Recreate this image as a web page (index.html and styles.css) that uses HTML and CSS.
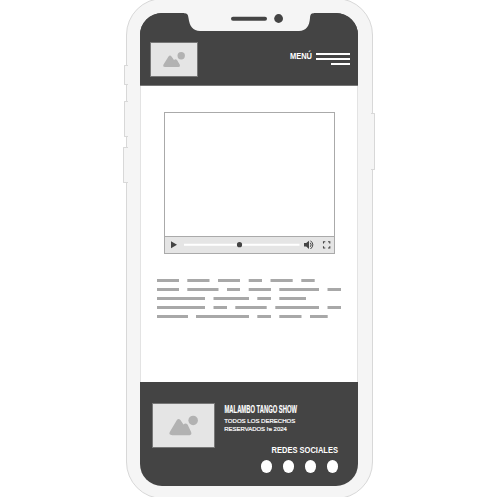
FILE: index.html
```html
<!DOCTYPE html>
<html lang="es">
<head>
<meta charset="utf-8">
<title>Malambo Tango Show</title>
<link rel="stylesheet" href="styles.css">
</head>
<body>
<div class="phone">
  <i class="button silent"></i><i class="button volume-up"></i><i class="button volume-down"></i><i class="button power"></i>
  <main class="screen">
    <svg class="notch" width="130" height="31" viewBox="184 0 130 31"><path d="M184 12v1.2C187 13.2 188 14 188.500 18C189.500 26 193 31 200 31H299C306 31 309.500 26 310 18C310.300 14.500 311 13.200 314 13.200V12Z" fill="#f5f5f5"/><rect x="231" y="16.800" width="36" height="4" rx="2" fill="#444"/><circle cx="278.600" cy="18.500" r="4.400" fill="#444"/></svg>
    <header class="header">
      <svg class="picture logo" viewBox="0 0 48 35"><path d="M13.500 22.500L18.500 14.500Q20 12.700 21.500 14.500L24 18Q25.500 16.500 27 18L29.700 22.500Q30.500 25 28.500 25H15Q12.500 25 13.500 22.500Z"/><circle cx="31.200" cy="13.700" r="3.700"/></svg>
      <nav class="menu">
        <svg class="label" width="24" height="14" viewBox="0 -2 24 14"><text x="1" y="9" textLength="22" lengthAdjust="spacingAndGlyphs" font-size="8.500">MENÚ</text></svg>
        <span class="lines"><i></i><i></i><i></i></span>
      </nav>
    </header>
    <section class="content">
      <div class="video">
        <div class="frame"></div>
        <svg class="controls" width="169" height="16" viewBox="165 237 169 16"><path d="M171 241.300V248.300L177 244.800Z" fill="#444"/><path d="M184 244.800H299.500" stroke="#fff" stroke-width="2"/><circle cx="239.500" cy="244.700" r="2.600" fill="#444"/><path d="M304 243H306.200L309 240.700V248.900L306.200 246.600H304Z" fill="#444"/><path d="M310.300 242.800Q312 244.800 310.300 246.800M310.500 240.700Q315.200 244.800 310.500 249" fill="none" stroke="#444"/><path d="M325.300 241.800H323.500V243.600M328 241.800H329.800V243.600M325.300 248H323.500V246.200M328 248H329.800V246.200" fill="none" stroke="#444" stroke-width="1.100"/></svg>
      </div>
      <svg class="copy" width="184" height="39" viewBox="157 279 184 39"><path d="M157 280.500H179M187.300 280.500H209.500M218 280.500H240M248.700 280.500H262M270.500 280.500H292.700M301.300 280.500H314.700M157 289.500H179M187.300 289.500H218.500M227 289.500H240M248.700 289.500H271M279.300 289.500H319M327.500 289.500H341M157 298.500H205M213.500 298.500H249M257.300 298.500H271M279.300 298.500H306M157 307.500H205M213.500 307.500H227M235.300 307.500H266.700M275.300 307.500H319M327.500 307.500H341M157 316.500H188M196 316.500H249M257.300 316.500H271M279.300 316.500H301.500M310 316.500H327.700"/></svg>
    </section>
    <footer class="footer">
      <div class="brand">
        <svg class="picture poster" viewBox="0 0 62 44"><path d="M17.500 28.500L24.500 16.500Q26 14.500 28 16.500L31 21Q33 19 35 21L38.500 28.500Q39.500 31.500 37 31.500H20Q16 31.500 17.500 28.500Z"/><circle cx="40.500" cy="17" r="4.700"/></svg>
        <svg class="label" width="100" height="36" viewBox="223 401 100 36"><text class="title" x="224.500" y="413" textLength="72.500" lengthAdjust="spacingAndGlyphs" font-size="11">MALAMBO TANGO SHOW</text><text class="legal" x="224.300" y="423" textLength="71" lengthAdjust="spacingAndGlyphs" font-size="6.200">TODOS LOS DERECHOS</text><text class="legal" x="224.300" y="431" textLength="62.500" lengthAdjust="spacingAndGlyphs" font-size="6.200">RESERVADOS ŀe 2024</text></svg>
      </div>
      <div class="social">
        <svg class="label" width="70" height="12" viewBox="-3.5 0 70 12"><text x="0" y="8" textLength="66.500" lengthAdjust="spacingAndGlyphs" font-size="8.200">REDES SOCIALES</text></svg>
        <div class="dots"><i></i><i></i><i></i><i></i></div>
      </div>
    </footer>
  </main>
</div>
</body>
</html>
```
FILE: styles.css
```css
* { box-sizing: border-box; }
html, body { margin: 0; height: 100%; overflow: hidden; background: #fff; }
body { font-family: "Liberation Sans", sans-serif; }
svg { display: block; flex: none; }

.phone {
  position: relative;
  width: 247px;
  height: 501px;
  margin: -2px 0 0 126px;
  padding: 14px 13px 12px;
  border: 1px solid #d8d8d8;
  border-radius: 37px;
  background: #f5f5f5;
}
.button {
  position: absolute;
  width: 4px;
  background: #f5f5f5;
  border: 1px solid #d8d8d8;
  border-right: 0;
  border-radius: 1px 0 0 1px;
}
.silent { left: -3px; top: 66px; height: 20px; }
.volume-up { left: -3px; top: 102px; height: 36px; }
.volume-down { left: -4px; top: 148px; width: 5px; height: 36px; }
.power { right: -3px; top: 114px; height: 57px; border: 1px solid #d8d8d8; border-left: 0; border-radius: 0 1px 1px 0; }

.screen {
  display: flex;
  flex-direction: column;
  width: 218px;
  height: 473px;
  overflow: hidden;
  border-radius: 22px;
  background: #444;
}
.notch { position: absolute; left: 57px; top: 1px; }

.header {
  display: flex;
  justify-content: space-between;
  height: 73px;
  padding: 28.5px 8px 0 10px;
  background: #444;
  border-bottom: 1px solid #777;
  flex: none;
}
.picture { background: #e5e5e5; outline: 1px solid #777; outline-offset: -1px; fill: #b2b2b2; }
.logo { width: 48px; height: 35px; }
.menu { display: flex; gap: 3px; padding-top: 8.5px; }
.menu .label { margin-top: -2px; }
.label { fill: #fff; font-weight: bold; overflow: visible; }
.lines { display: flex; flex-direction: column; align-items: flex-end; gap: 3.5px; padding-top: 3px; width: 34px; }
.lines i { display: block; width: 100%; height: 1.5px; background: #fff; flex: none; }
.lines i:last-child { width: 19px; }

.content {
  height: 296px;
  flex: none;
  padding: 26px 17px 0;
  background: #fff;
  border-left: 1px solid #e3e3e3;
  border-right: 1px solid #e3e3e3;
}
.video { width: 171px; margin-left: 6px; border: 1px solid #aaa; }
.frame { height: 123px; }
.controls { width: 169px; height: 17px; background: #e5e5e5; border-top: 1px solid #aaa; }
.copy { margin: 25px 0 0 -1px; fill: none; stroke: #a8a8a8; stroke-width: 3px; }

.footer { flex: 1; padding: 21px 20px 0 12px; }
.brand { display: flex; gap: 8px; height: 44px; }
.brand .label { margin-top: -2px; }
.poster { width: 63px; height: 45px; }
.title { font-weight: bold; stroke: #fff; stroke-width: .2px; }
.legal { font-weight: normal; stroke: #fff; stroke-width: .2px; }
.social { display: flex; flex-direction: column; align-items: flex-end; margin-top: -2px; }
.dots { display: flex; gap: 11px; margin-top: 3px; }
.dots i { width: 11px; height: 12.5px; border-radius: 50%; background: #fff; }
```
